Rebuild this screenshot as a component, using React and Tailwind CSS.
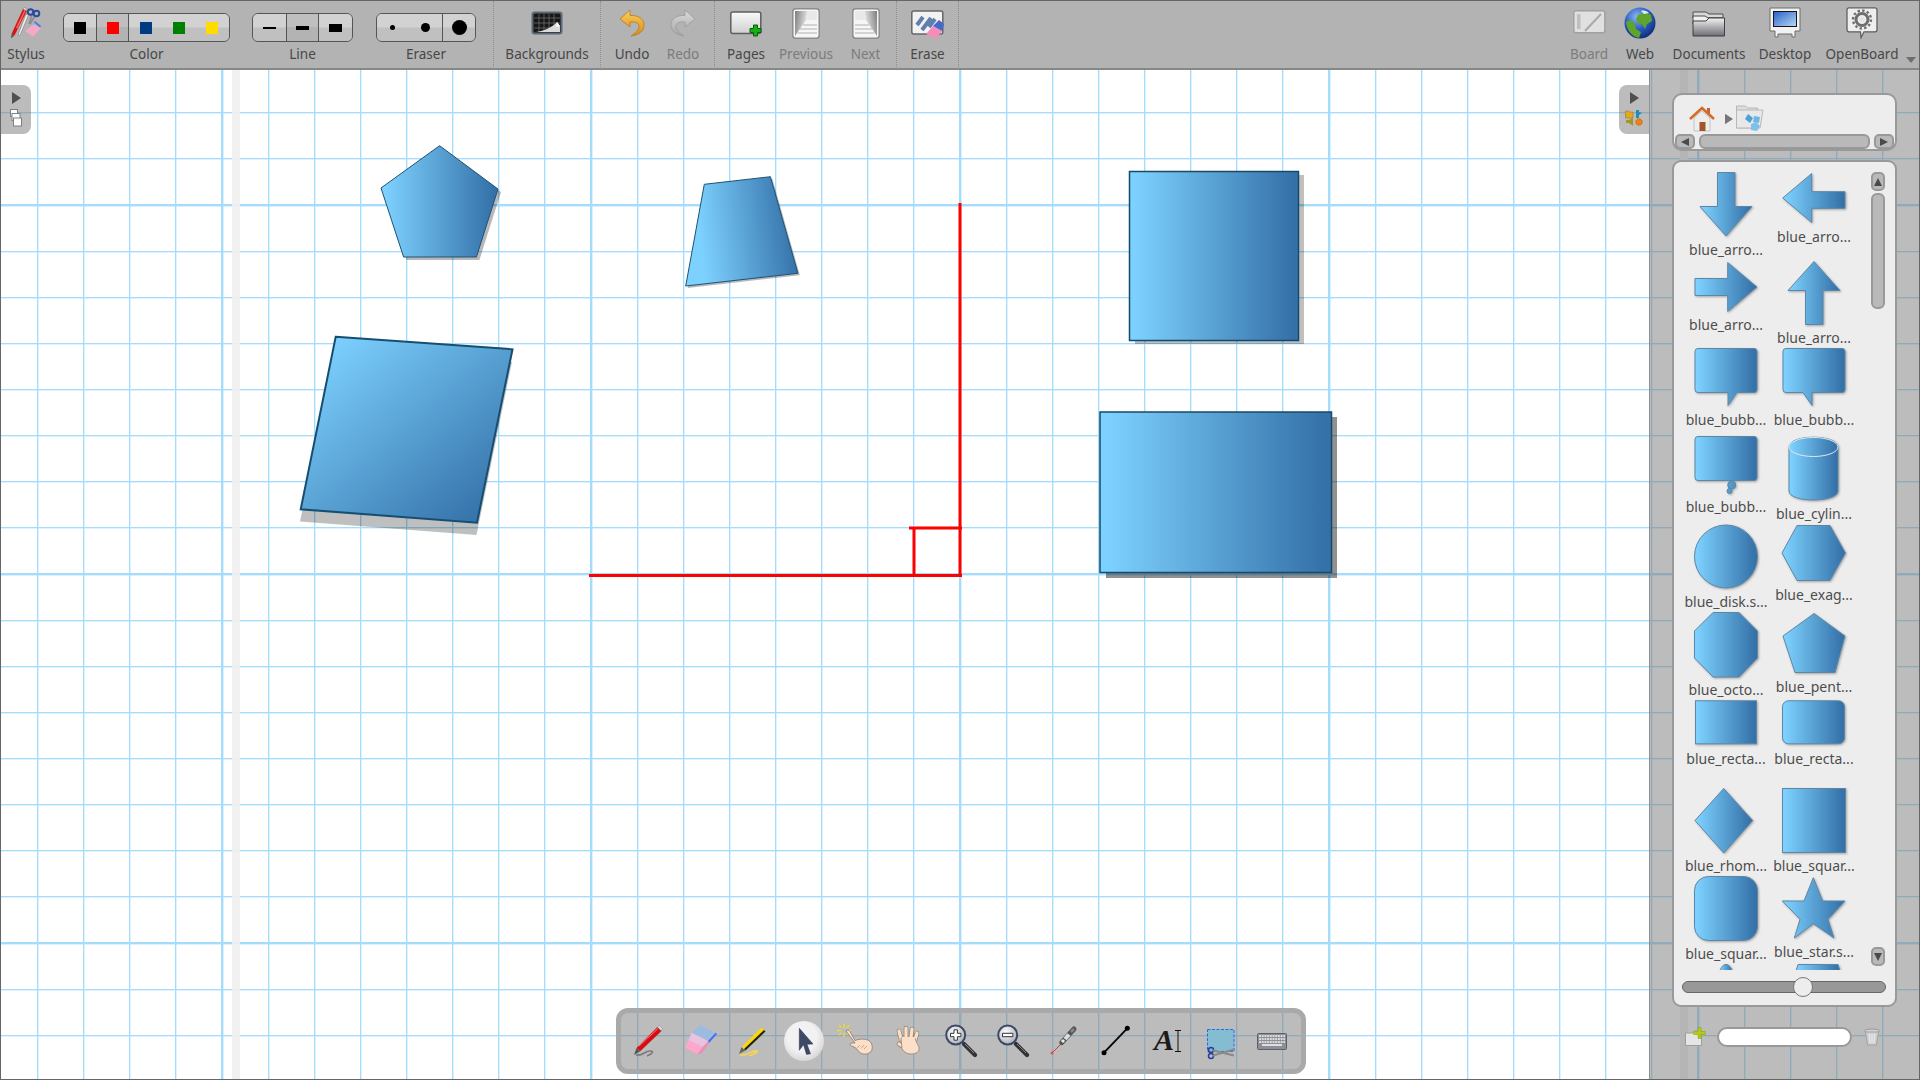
import React from "react";

const FONT = "[font-family:'Noto_Sans','Open_Sans',sans-serif]";

const Grad = ({ id, x1 = 0, y1 = 0, x2 = 1, y2 = 0, a = "#7dd1ff", b = "#3471a8" }) => (
  <linearGradient id={id} x1={x1} y1={y1} x2={x2} y2={y2}>
    <stop offset="0.03" stopColor={a} />
    <stop offset="0.97" stopColor={b} />
  </linearGradient>
);

/* ---------- top bar icons ---------- */
const StylusIcon = () => (
  <svg width="32" height="32" viewBox="0 0 32 32">
    <path d="M22 8l-3 9M25 9l-5 8" stroke="#8d8d92" strokeWidth="1.600" fill="none" />
    <circle cx="20.500" cy="5" r="2.800" fill="none" stroke="#2b4a9e" strokeWidth="2" />
    <circle cx="26.500" cy="6.500" r="2.800" fill="none" stroke="#2b4a9e" strokeWidth="2" />
    <path d="M8 28L16 7l2.500 1L10 28.500z" fill="#efefef" stroke="#777" strokeWidth=".6" />
    <path d="M1.500 27L13 2l4 1.800L4.500 28.500z" fill="#d81515" />
    <path d="M6 21L14.500 3l1.200.5L7.500 21.500z" fill="#f56a6a" />
    <path d="M13 2l1-1.500 3 1.300-.2 2z" fill="#e9e9e9" stroke="#777" strokeWidth=".5" />
    <path d="M1.500 27l3 1.500-3.500 3z" fill="#555" />
    <path d="M15 24l9-7 7 4-8 8.500z" fill="#f7a8c8" />
    <path d="M18 20.500l7-6.500 6 5-.5 2-7-4z" fill="#8fb6dd" />
    <path d="M25 14l6 5-.8 1.500-6-5z" fill="#4d79d0" />
  </svg>
);
const BackgroundsIcon = () => (
  <svg width="32" height="24" viewBox="0 0 32 24">
    <rect x=".5" y=".5" width="31" height="23" rx="3" fill="#5f6878" />
    <rect x="2.500" y="2.500" width="27" height="19" rx="1.500" fill="#171717" />
    <path d="M3 7h26M3 12h26M3 17h26M8 3v18M13 3v18M18 3v18M23 3v18" stroke="#777" strokeWidth=".7" />
    <path d="M5 21c8-1 17-5 21-10l3 4v6z" fill="#d9d9d9" />
    <path d="M26 11l3 4-4 1z" fill="#fff" />
  </svg>
);
const UndoIcon = ({ grey }) => (
  <svg width="26" height="28" viewBox="0 0 26 28" className={grey ? "-scale-x-100" : ""}>
    <defs>
      <linearGradient id={grey ? "ru" : "uu"} x1="0" y1="0" x2="0" y2="1">
        <stop offset="0" stopColor={grey ? "#dcdcdc" : "#fbd15c"} />
        <stop offset="1" stopColor={grey ? "#a4a4a4" : "#d98a16"} />
      </linearGradient>
    </defs>
    <path
      d="M11 1L1 10l10 8v-5c5-.5 9 .5 9 4.500 0 3.500-3 6-8 9.500 8-1 13-5 13-11 0-7-7-10-14-9.500z"
      fill={`url(#${grey ? "ru" : "uu"})`}
      stroke={grey ? "#9a9a9a" : "#b87a1c"}
      strokeWidth=".8"
    />
  </svg>
);
const PagesIcon = () => (
  <svg width="32" height="28" viewBox="0 0 32 28" className="mt-[4px]">
    <defs>
      <linearGradient id="pg" x1="0" y1="0" x2="0" y2="1">
        <stop offset="0" stopColor="#fafafa" />
        <stop offset="1" stopColor="#cfcfcf" />
      </linearGradient>
    </defs>
    <rect x=".8" y="1" width="30" height="21.500" rx="2" fill="url(#pg)" stroke="#5e5e66" strokeWidth="1.500" />
    <path d="M22 16.500h3.500V13h4v3.500H33v4h-3.500V24h-4v-3.500H22z" transform="translate(-2 1)" fill="#16b016" stroke="#0a5c0a" strokeWidth="1" />
  </svg>
);
const PageCurl = ({ flip }) => {
  const id = flip ? "pc2" : "pc1";
  return (
    <svg width="28" height="31" viewBox="0 0 28 31" className="mt-[1px]">
      <defs>
        <linearGradient id={id} x1="0" y1="0" x2="1" y2="0.3">
          <stop offset="0" stopColor="#7e7e7e" />
          <stop offset="1" stopColor="#e6e6e6" />
        </linearGradient>
      </defs>
      <g transform={flip ? "translate(28 0) scale(-1 1)" : ""}>
        <rect x=".8" y=".8" width="26.400" height="29.400" rx="3" fill="#f6f6f6" stroke="#8d8d8d" strokeWidth="1.500" />
        <path d="M3 3h12c2 3-2 5-1 9L3 28z" fill={`url(#${id})`} />
        <path d="M15 3h10v9H14c-1-4 3-6 1-9z" fill="#e9e9e9" />
        <path d="M11 17h14M8 21h17M5.500 25h19.500" stroke="#b0b0b0" strokeWidth="1" />
      </g>
    </svg>
  );
};
const EraseIcon = () => (
  <svg width="34" height="30" viewBox="0 0 34 30" className="mt-[4px]">
    <rect x=".8" y="1" width="31" height="23" rx="2" fill="#f2f2f2" stroke="#66666e" strokeWidth="1.500" />
    <path d="M6 15l6-8M11 20l9-12M18 17l6-8" stroke="#5f7fae" strokeWidth="4" fill="none" />
    <path d="M15 24l7-8 9 5-6 8z" fill="#f58dbb" />
    <path d="M22 16l6-6 5 4-2 7z" fill="#4668c8" />
  </svg>
);
const BoardIcon = () => (
  <svg width="33" height="26" viewBox="0 0 33 26" opacity=".75">
    <rect x=".8" y=".8" width="31" height="22" rx="2" fill="#efefef" stroke="#9a9a9a" strokeWidth="1.400" />
    <rect x="4" y="4" width="3.500" height="15" fill="#c3c3c3" />
    <path d="M12 21L28 4" stroke="#a5a5a5" strokeWidth="2" />
  </svg>
);
const Globe = () => (
  <svg width="32" height="32" viewBox="0 0 32 32">
    <defs>
      <radialGradient id="gl" cx=".4" cy=".3" r=".8">
        <stop offset="0" stopColor="#8fb8f0" />
        <stop offset=".5" stopColor="#2a5cc0" />
        <stop offset="1" stopColor="#0c1f66" />
      </radialGradient>
    </defs>
    <circle cx="16" cy="16" r="15.500" fill="url(#gl)" />
    <path d="M14 8l8-3 5 3 1 6-5 3-2 5-3-5-4-1-2-4zM2 15l5-2 4 4 1 5 5 3-2 6c-7-1-12-8-13-16z" fill="#5fa52c" />
    <path d="M17 4c3-1 6 0 8 2l-5 1z" fill="#dfeaff" />
  </svg>
);
const DocumentsIcon = () => (
  <svg width="34" height="30" viewBox="0 0 34 30">
    <defs>
      <linearGradient id="df" x1="0" y1="0" x2="0" y2="1">
        <stop offset="0" stopColor="#f3f3f3" />
        <stop offset="1" stopColor="#6c6c74" />
      </linearGradient>
    </defs>
    <path d="M1 4h13l3 2h14v4H1z" fill="#d8d8d8" stroke="#4c4c50" strokeWidth="1" />
    <path d="M1 8h12l3 2h14v6H1z" fill="#efefef" stroke="#4c4c50" strokeWidth="1" />
    <path d="M1 13h13l3-3h15.500v18H1z" fill="url(#df)" stroke="#3e3e42" strokeWidth="1" />
  </svg>
);
const DesktopIcon = () => (
  <svg width="32" height="31" viewBox="0 0 32 31">
    <defs>
      <linearGradient id="ds" x1="0" y1="0" x2="1" y2="1">
        <stop offset="0" stopColor="#2a63c8" />
        <stop offset="1" stopColor="#b6d6f4" />
      </linearGradient>
    </defs>
    <path d="M1 1h30v23h-5v6h-3v-3H9v3H6v-6H1z" fill="#f2f2f2" stroke="#6d6d6d" strokeWidth="1" />
    <rect x="4" y="4" width="24" height="16" fill="#15151a" />
    <rect x="5" y="5" width="22" height="14" fill="url(#ds)" />
  </svg>
);
const OpenBoardIcon = () => (
  <svg width="32" height="32" viewBox="0 0 32 32">
    <path d="M3 .8h26a2 2 0 0 1 2 2v20a2 2 0 0 1-2 2H18l-3 6-.5-6H3a2 2 0 0 1-2-2v-20a2 2 0 0 1 2-2z" fill="#eee" stroke="#5e5e66" strokeWidth="1.300" />
    <circle cx="16" cy="12.500" r="6" fill="none" stroke="#6e6e6e" strokeWidth="3" />
    <circle cx="16" cy="12.500" r="9" fill="none" stroke="#6e6e6e" strokeWidth="2.400" strokeDasharray="2.400 2.300" />
    <circle cx="16" cy="12.500" r="2.800" fill="#e5e5e5" />
  </svg>
);

/* ---------- bottom toolbar icons ---------- */
const I40 = ({ children }) => (
  <svg width="40" height="40" viewBox="0 0 40 40">
    {children}
  </svg>
);
const Pen = () => (
  <I40>
    <path d="M8 34c8 1 8-4 14-4 5 0 2 3-3 5" stroke="#7b7b7b" strokeWidth="1.600" fill="none" />
    <path d="M6 34l2.500-7 4 3z" fill="#555" />
    <path d="M8.500 27L29.500 6l4 4L12.500 30z" fill="#d40f14" />
    <path d="M11 25L30 7.500" stroke="#ff7b7b" strokeWidth="1" />
    <path d="M29.500 6l2-1.500 3 3-1 2.500z" fill="#ddd" stroke="#777" strokeWidth=".4" />
  </I40>
);
const RubberIcon = () => (
  <I40>
    <path d="M20 4l15.700 7.700L28.300 20l-16.600-8.300z" fill="#9dbbdf" />
    <path d="M35.700 11.700L37 13l-8 9-1-2z" fill="#3f6cf0" />
    <path d="M11.700 11.700L28.300 20 22.700 26 8.300 19.300z" fill="#e8c2de" />
    <path d="M8.300 19.300L22.700 26l-5.400 7.300L5 26.700z" fill="#ffa6cb" />
    <path d="M28.300 20l-5.600 6-5.400 7.300 4-.5 7-9z" fill="#ec8fb8" />
  </I40>
);
const YellowPen = () => (
  <I40>
    <path d="M8 34c8 1 10-4 16-4 4 0-2 3-7 5" stroke="#f5d45a" strokeWidth="1.800" fill="none" />
    <path d="M7 33l2.500-7 4 3.500z" fill="#666" />
    <path d="M9.500 26L29.500 6.500l4 4L13.500 29.500z" fill="#f8d80a" />
    <path d="M12 28L32 9l1.500 1.500-20 19z" fill="#222" />
  </I40>
);
const Cursor = () => (
  <svg width="40" height="40" viewBox="0 0 40 40">
    <defs>
      <radialGradient id="cur" cx=".45" cy=".4" r=".6">
        <stop offset=".6" stopColor="#f2f2f2" />
        <stop offset="1" stopColor="#d8d8d8" />
      </radialGradient>
    </defs>
    <circle cx="20" cy="20" r="20" fill="url(#cur)" />
    <path d="M15.300 7.300L29 23l-6 .3 3.500 9.500-4 .6-3-9.700-4.200 5.600z" fill="#3d4967" stroke="#2a3350" strokeWidth=".5" />
  </svg>
);
const Pointer = () => (
  <I40>
    <path d="M8 3v4M8 12v4M1 9.500h4M11 9.500h4M3 4.500l2 2M11 12l2 2M13 4.500l-2 2M5 12l-2 2" stroke="#ffe000" strokeWidth="1.200" />
    <path d="M10 10c1.500-1.500 3-1 4 .5l5 9c5-2 12-2 15 1 3 3 3 9 0 11-3 2-6 2-9 1-3-2-4-5-6-6-3-1.500-5-2-5-3 0-2 3-1.500 5-1.500z" fill="#fbdfc8" stroke="#94806f" strokeWidth=".9" />
    <path d="M24 24l-3 3M28 24l-3 3.500M31 25l-3 3" stroke="#b89c86" strokeWidth=".8" />
  </I40>
);
const HandIcon = () => (
  <I40>
    <g strokeLinecap="round" fill="none">
      <g stroke="#94806f" strokeWidth="4.600">
        <path d="M13 18L11 10M18 16V7M23 16l1-8M27 19l2-7M16 26l-5-3" />
      </g>
      <g stroke="#fbdfc8" strokeWidth="3.200">
        <path d="M13 18L11 10M18 16V7M23 16l1-8M27 19l2-7M16 26l-5-3" />
      </g>
    </g>
    <path d="M13 17h14c1 4 2 5 4 9 1 5-3 7-8 7-4 0-7-2-9-5z" fill="#fbdfc8" stroke="#94806f" strokeWidth=".8" />
    <path d="M14 16h13v4H14z" fill="#fbdfc8" />
  </I40>
);
const Magnifier = ({ plus }) => {
  const id = plus ? "mgp" : "mgm";
  return (
    <I40>
      <defs>
        <radialGradient id={id} cx=".4" cy=".35" r=".8">
          <stop offset="0" stopColor="#fff" />
          <stop offset="1" stopColor="#9aa0aa" />
        </radialGradient>
      </defs>
      <path d="M24 23l11 11" stroke="#333" strokeWidth="4.200" strokeLinecap="round" />
      <path d="M25 23l9 9" stroke="#888" strokeWidth="1" />
      <circle cx="15.700" cy="14" r="9.500" fill={`url(#${id})`} stroke="#3e4866" strokeWidth="2" />
      <path d={plus ? "M10.500 12.300h3.500V8.800h3.400v3.500h3.500v3.400h-3.500v3.500H14v-3.500h-3.500z" : "M10.500 12.300h10.400v3.400H10.500z"} fill="#fff" stroke="#333" strokeWidth="1" />
    </I40>
  );
};
const Laser = () => (
  <I40>
    <path d="M8 32L18 22" stroke="#e23030" strokeWidth="1" />
    <circle cx="8" cy="32" r="1.600" fill="#e84040" opacity=".8" />
    <path d="M17.700 21.700L30 8" stroke="#555" strokeWidth="5" strokeLinecap="round" />
    <path d="M21 18l4-4.500" stroke="#ddd" strokeWidth="4" />
    <path d="M18 21l2-2" stroke="#eee" strokeWidth="3" />
    <path d="M27 11l3-3" stroke="#888" strokeWidth="2.500" />
  </I40>
);
const LineIcon = () => (
  <I40>
    <path d="M8 31.700L31.300 7.300" stroke="#000" strokeWidth="1.800" />
    <circle cx="8" cy="31.700" r="2.500" fill="#000" />
    <circle cx="31.300" cy="7.300" r="2.500" fill="#000" />
  </I40>
);
const TextIcon = () => (
  <div className="relative w-[40px] h-[40px]">
    <span className="absolute left-[6px] top-[1px] text-[30px] leading-[36px] font-bold italic text-[#1b1b1b] [font-family:'Liberation_Serif',serif]">A</span>
    <svg className="absolute inset-0" width="40" height="40" viewBox="0 0 40 40">
      <path d="M27 9.500h3v21h-3M33 9.500h-3M33 30.500h-3" stroke="#111" strokeWidth="1" fill="none" />
    </svg>
  </div>
);
const Capture = () => (
  <I40>
    <rect x="7.500" y="8.500" width="26.500" height="22" fill="#84bdd1" stroke="#1e6bf0" strokeWidth="1" strokeDasharray="3 1.500" />
    <circle cx="11" cy="29" r="2.500" fill="none" stroke="#2b3f96" strokeWidth="1.500" />
    <circle cx="11" cy="35" r="2.500" fill="none" stroke="#2b3f96" strokeWidth="1.500" />
    <path d="M13 29.500l21 5M13 34.500l21-6" stroke="#8a8a8a" strokeWidth="2" />
  </I40>
);
const Keyboard = () => (
  <I40>
    <rect x="5.500" y="12.500" width="29" height="16" rx="1" fill="#8c8f96" stroke="#5e6068" strokeWidth="1" />
    <path d="M7 15h26M7 18h26M7 21h26" stroke="#f3f3f3" strokeWidth="1.600" strokeDasharray="2 .7" />
    <path d="M10 24h20" stroke="#f3f3f3" strokeWidth="1.600" />
  </I40>
);

/* ---------- small panel icons ---------- */
const Tri = ({ right = true, c = "#4c4c4c", w = 9, h = 12 }) => (
  <svg width={w} height={h} viewBox="0 0 9 12">
    <path d={right ? "M0 0l9 6-9 6z" : "M9 0L0 6l9 6z"} fill={c} />
  </svg>
);
const Stack = () => (
  <svg width="12" height="18" viewBox="0 0 12 18">
    <rect x=".5" y=".5" width="7" height="7" fill="#fff" stroke="#808080" />
    <rect x="2" y="4.500" width="8" height="7" fill="#fff" stroke="#808080" />
    <rect x="3.500" y="9" width="8" height="8" fill="#fff" stroke="#808080" />
  </svg>
);
const Lib = () => (
  <svg width="18" height="17" viewBox="0 0 18 17">
    <path d="M.5 2h3l1 1H8v6H.5z" fill="#e4a720" stroke="#9a7010" strokeWidth=".5" />
    <path d="M11 1h3v2l3 1-3 2v3h-3z" fill="#1f8fb8" />
    <path d="M1 11h3l4-3v9l-4-3H1z" fill="#a29a20" />
    <circle cx="14" cy="13" r="3.200" fill="#f07f18" stroke="#c96010" strokeWidth="1" strokeDasharray="1.500 1" />
  </svg>
);
const Home = () => (
  <svg width="26" height="26" viewBox="0 0 26 26">
    <path d="M5 12v13h16V12L13 5z" fill="#ededed" stroke="#aaa" strokeWidth=".6" />
    <rect x="10.500" y="16" width="6" height="9" fill="#a0552a" />
    <path d="M18 2h3v6l-3-2z" fill="#c9622a" />
    <path d="M1 13L13 2l12 11" fill="none" stroke="#d46b2b" strokeWidth="2.500" />
  </svg>
);
const LibFolder = () => (
  <svg width="28" height="28" viewBox="0 0 28 28">
    <path d="M.5 1h9l2 2h10v20H.5z" fill="#dedede" stroke="#b5b5b5" />
    <path d="M.5 5h26.500l-3 18H.5z" fill="#e8e8e8" stroke="#b8b8b8" />
    <path d="M12 9l5 4-3 5-5-4z" fill="#4aa2d5" />
    <path d="M18 11l6 1-1 6-6-1z" fill="#6fb7e2" />
    <path d="M15 19l5-2 4 4-3 5-6-1z" fill="#7fc0ea" />
  </svg>
);
const FolderPlus = () => (
  <svg width="21" height="19" viewBox="0 0 21 19">
    <path d="M.5 6h7l2-2h7v14.500H.5z" fill="#e5e5e5" stroke="#9d9d9d" />
    <path d="M13 .5h3v4h4.500v3H16v4h-3v-4H8.500v-3H13z" fill="#b4cc10" stroke="#8a9c10" strokeWidth=".5" />
  </svg>
);
const Trash = () => (
  <svg width="16" height="18" viewBox="0 0 16 18">
    <ellipse cx="8" cy="3" rx="7.500" ry="2" fill="#d2d2d2" stroke="#9a9a9a" />
    <path d="M1.500 4l2 13h9l2-13z" fill="#cfcfcf" stroke="#a2a2a2" />
    <path d="M5.500 6l.5 9M8 6v9M10.500 6l-.5 9" stroke="#eee" />
  </svg>
);

/* ---------- thumbnails ---------- */
const S = "#5d87a5";
const thumbs = [
  { l: "blue_arro...", h: 65, t: 0, d: <polygon points="23.500,.5 41,.5 41,34.500 58,34.500 32,64 6,34.500 23.500,34.500" /> },
  { l: "blue_arro...", h: 51, t: 1, d: <polygon points=".7,25 29.700,.5 29.700,18.700 63,18.700 63,35.300 29.700,35.300 29.700,49.500" /> },
  { l: "blue_arro...", h: 50, t: 2, d: <polygon points="1,16.500 33.700,16.500 33.700,.5 63,25 33.700,49.500 33.700,33.500 1,33.500" /> },
  { l: "blue_arro...", h: 64, t: 1, d: <polygon points="32,.5 58,29.500 41,29.500 41,63.500 23.500,63.500 23.500,29.500 6,29.500" /> },
  { l: "blue_bubb...", h: 59, t: 0, d: <path d="M4 .5h56a3 3 0 0 1 3 3v38a3 3 0 0 1-3 3H43L34 57.500V44.500H4a3 3 0 0 1-3-3v-38a3 3 0 0 1 3-3z" /> },
  { l: "blue_bubb...", h: 59, t: 0, d: <path d="M4 .5h56a3 3 0 0 1 3 3v38a3 3 0 0 1-3 3H30v13L21 44.500H4a3 3 0 0 1-3-3v-38a3 3 0 0 1 3-3z" /> },
  { l: "blue_bubb...", h: 58, t: 0, d: <path d="M4 .5h56a3 3 0 0 1 3 3v38a3 3 0 0 1-3 3H4a3 3 0 0 1-3-3v-38a3 3 0 0 1 3-3zM41.700 49a4 4 0 1 1-8 0 4 4 0 0 1 8 0zM38 55a2.500 2.500 0 1 1-5 0 2.500 2.500 0 0 1 5 0z" /> },
  { l: "blue_cylin...", h: 64, t: 1, d: <g><path d="M7 10c0-13 49-13 49 0v44c0 12-49 12-49 0z" /><ellipse cx="31.500" cy="10" rx="24.500" ry="9.500" stroke="#dfe8ee" /></g> },
  { l: "blue_disk.s...", h: 65, t: 0, d: <circle cx="32" cy="32.500" r="31.500" /> },
  { l: "blue_exag...", h: 57, t: 1, d: <polygon points="15,.5 48,.5 63.500,28 48,55.500 15,55.500 0,28" /> },
  { l: "blue_octo...", h: 65, t: 0, d: <polygon points="19,.5 45,.5 63.500,19 63.500,46 45,65 19,65 .5,46 .5,19" /> },
  { l: "blue_pent...", h: 61, t: 1, d: <polygon points="32,.5 63,23 53,59.500 13,59.500 1,23" /> },
  { l: "blue_recta...", h: 46, t: 0, d: <rect x="1.500" y=".8" width="61" height="43" /> },
  { l: "blue_recta...", h: 46, t: 0, d: <rect x=".5" y=".8" width="62" height="43" rx="6" /> },
  { l: "blue_rhom...", h: 65, t: 0, d: <polygon points="29.700,.5 58.700,32.500 29.700,65 1,32.500" /> },
  { l: "blue_squar...", h: 65, t: 0, d: <rect x=".5" y=".5" width="63" height="64" /> },
  { l: "blue_squar...", h: 65, t: 0, d: <rect x=".5" y=".5" width="63" height="64" rx="14" /> },
  { l: "blue_star.s...", h: 62, t: 1, d: <polygon points="31.300,.7 40.700,24 63,24 46,42.300 52,61 31.300,46.700 12.300,61 18,42.300 .3,24 22,24" /> },
  { l: "", h: 20, t: 0, d: <path d="M32 .5c3 0 5 3 6 6h-12c1-3 3-6 6-6z" /> },
  { l: "", h: 20, t: 0, d: <polygon points="16,.5 56,.5 58,7 14,7" /> },
];

const Thumb = ({ t, i }) => (
  <div className="flex flex-col items-center h-[88px] w-[88px]">
    <svg
      width="64"
      height={t.h}
      viewBox={`0 0 64 ${t.h}`}
      style={{ marginTop: t.t }}
      className="shrink-0 drop-shadow-[1.5px_1.5px_1px_rgba(0,0,0,0.3)] overflow-visible"
    >
      <defs>
        <Grad id={`th${i}`} />
      </defs>
      <g fill={`url(#th${i})`} stroke={S} strokeWidth="1">
        {t.d}
      </g>
    </svg>
    {t.l && <div className="mt-[3px] h-[20px] leading-[20px] text-[14px] text-[#4d4d4d] whitespace-nowrap">{t.l}</div>}
  </div>
);

/* ---------- canvas ---------- */
const vLines = [];
const hLines = [];
for (let k = -4; k <= 37; k++) {
  const x = 222 + 46.125 * k;
  vLines.push(k % 8 === 0 ? [Math.floor(x) - 1, 2.4] : [Math.floor(x), 1.35]);
}
for (let k = -3; k <= 19; k++) {
  const y = 205 + 46.125 * k;
  hLines.push(k % 8 === 0 ? [Math.floor(y) - 1, 2.4] : [Math.floor(y), 1.35]);
}

const Canvas = () => (
  <svg className="absolute inset-0" width="1920" height="1010" viewBox="0 70 1920 1010">
    <defs>
      <Grad id="gPent" />
      <Grad id="gTrap" x1="0.05" y1="0.1" x2="0.95" y2="0" />
      <Grad id="gQuad" x1="0.05" y1="0.05" x2="0.95" y2="0.95" />
      <Grad id="gR1" />
      <Grad id="gR2" />
    </defs>
    <rect x="0" y="70" width="1920" height="1010" fill="#fff" />
    <g fill="#a5dcfb">
      {vLines.map(([x, w]) => (
        <rect key={`v${x}`} x={x} y="70" width={w} height="1010" />
      ))}
      {hLines.map(([y, w]) => (
        <rect key={`h${y}`} x="0" y={y} width="1920" height={w} />
      ))}
    </g>
    <rect x="232" y="70" width="8" height="1010" fill="#efefef" fillOpacity=".9" shapeRendering="crispEdges" />
    <rect x="1680" y="70" width="8" height="1010" fill="#efefef" fillOpacity=".9" shapeRendering="crispEdges" />

    <polygon points="442.600,148.700 501,192 479.400,260 406.600,260 384,191" fill="#000" fillOpacity=".28" />
    <polygon points="439.600,145.700 498,189 476.400,257 403.600,257 381,188" fill="url(#gPent)" stroke="#1d5273" strokeWidth="1" />

    <polygon points="706.300,186.300 772.400,178.700 799.900,275.300 687.700,288" fill="#000" fillOpacity=".28" />
    <polygon points="704.300,184.300 770.400,176.700 797.900,273.300 685.700,286" fill="url(#gTrap)" stroke="#1d5273" strokeWidth="1" />

    <polygon points="335,349 512,362 476.500,535 300,521.500" fill="#000" fillOpacity=".25" />
    <polygon points="335.700,336.700 512.500,349.300 477,522.700 300.700,509.300" fill="url(#gQuad)" stroke="#154e70" strokeWidth="2" />

    <rect x="1135" y="175" width="169" height="169" fill="#000" fillOpacity=".25" shapeRendering="crispEdges" />
    <rect x="1129.500" y="171.500" width="169" height="169" fill="url(#gR1)" stroke="#174a68" strokeWidth="1.500" />

    <rect x="1106" y="417" width="231" height="161" fill="#000" fillOpacity=".43" shapeRendering="crispEdges" />
    <rect x="1100" y="412" width="231.500" height="160.500" fill="url(#gR2)" stroke="#174a68" strokeWidth="1.500" />

    <g stroke="#ff0000" strokeWidth="3" fill="none">
      <path d="M960 203V576M589 575.500H962M909 528H962M914 528V575" />
    </g>
  </svg>
);

/* ---------- chrome ---------- */
const Label = ({ children, off }) => (
  <div className={`h-[20px] leading-[20px] text-[13.5px] whitespace-nowrap ${off ? "text-[#7c7c7c]" : "text-[#474747]"}`}>{children}</div>
);
const Tool = ({ w, label, off, children }) => (
  <div className="flex flex-col items-center shrink-0" style={{ width: w }}>
    <div className="h-[43px] flex items-center justify-center">{children}</div>
    <Label off={off}>{label}</Label>
  </div>
);
const Sep = () => <div className="w-px h-[68px] shrink-0 border-l border-dotted border-[#8c8c8c]" />;

const Seg = ({ w, on, last, children }) => (
  <div
    className={`h-full flex items-center justify-center ${last ? "" : "border-r border-[#555]"} ${
      on ? "bg-[linear-gradient(#bfbfbf_50%,#b3b3b3_50%)]" : "bg-[linear-gradient(#d2d2d2_48%,#c0c0c0_52%)]"
    }`}
    style={{ width: w }}
  >
    {children}
  </div>
);
const Swatch = ({ c }) => <div className="w-[12px] h-[12px]" style={{ background: c }} />;
const Group = ({ label, ml, children }) => (
  <div className="flex flex-col items-center shrink-0" style={{ marginLeft: ml }}>
    <div className="mt-[12px] h-[29px] flex rounded-[6px] border border-[#555] overflow-hidden">{children}</div>
    <div className="mt-[2px]">
      <Label>{label}</Label>
    </div>
  </div>
);

const TopBar = () => (
  <header className="h-[70px] flex items-start bg-[#b3b3b3] border-t border-b-2 border-t-[#666] border-b-[#878787] pl-px">
    <Tool w={50} label="Stylus">
      <StylusIcon />
    </Tool>
    <Group label="Color" ml={12}>
      <Seg w={33}>
        <Swatch c="#000" />
      </Seg>
      <Seg w={32} on>
        <Swatch c="#ff0000" />
      </Seg>
      <Seg w={100} last>
        <div className="flex gap-[21px]">
          <Swatch c="#003c80" />
          <Swatch c="#008000" />
          <Swatch c="#ffdc00" />
        </div>
      </Seg>
    </Group>
    <Group label="Line" ml={22}>
      <Seg w={34}>
        <div className="w-[13px] h-[2px] bg-black" />
      </Seg>
      <Seg w={32} on>
        <div className="w-[13px] h-[4px] bg-black" />
      </Seg>
      <Seg w={33} last>
        <div className="w-[13px] h-[8px] bg-black" />
      </Seg>
    </Group>
    <Group label="Eraser" ml={23}>
      <Seg w={66}>
        <div className="flex items-center gap-[26px]">
          <div className="w-[5px] h-[5px] rounded-full bg-black" />
          <div className="w-[9px] h-[9px] rounded-full bg-black" />
        </div>
      </Seg>
      <Seg w={32} last>
        <div className="w-[15px] h-[15px] rounded-full bg-black" />
      </Seg>
    </Group>
    <div className="w-[17px] shrink-0" />
    <Sep />
    <Tool w={106} label="Backgrounds">
      <BackgroundsIcon />
    </Tool>
    <Sep />
    <Tool w={62} label="Undo">
      <UndoIcon />
    </Tool>
    <Tool w={40} label="Redo" off>
      <UndoIcon grey />
    </Tool>
    <div className="w-[11px] shrink-0" />
    <Sep />
    <Tool w={62} label="Pages">
      <PagesIcon />
    </Tool>
    <Tool w={58} label="Previous" off>
      <PageCurl />
    </Tool>
    <Tool w={61} label="Next" off>
      <PageCurl flip />
    </Tool>
    <Sep />
    <Tool w={61} label="Erase">
      <EraseIcon />
    </Tool>
    <Sep />
    <div className="flex-1" />
    <Tool w={50} label="Board" off>
      <BoardIcon />
    </Tool>
    <Tool w={52} label="Web">
      <Globe />
    </Tool>
    <Tool w={86} label="Documents">
      <DocumentsIcon />
    </Tool>
    <Tool w={66} label="Desktop">
      <DesktopIcon />
    </Tool>
    <Tool w={88} label="OpenBoard">
      <OpenBoardIcon />
    </Tool>
    <div className="w-[14px] shrink-0 relative h-full">
      <svg className="absolute left-0 top-[56px]" width="10" height="6" viewBox="0 0 10 6">
        <path d="M0 0h10L5 6z" fill="#6e6e6e" />
      </svg>
    </div>
  </header>
);

const ScrollBtn = ({ dir, w = "w-[14px]", h = "h-[19px]" }) => (
  <div className={`${w} ${h} rounded-[5px] border-2 border-[#999] bg-[#b9b9b9] flex items-center justify-center shrink-0`}>
    <svg width="8" height="8" viewBox="0 0 8 8">
      <path d={{ up: "M4 0l4 8H0z", down: "M0 0h8L4 8z", left: "M8 0v8L0 4z", right: "M0 0v8l8-4z" }[dir]} fill="#4a4a4a" />
    </svg>
  </div>
);

const RightPanel = () => (
  <aside className="absolute top-0 right-0 bottom-0 w-[271px] bg-[#797979]/50 border-l border-[#8f8f8f] pl-[22px]">
    <div className="mt-[23px] w-[225px] h-[58px] rounded-[10px] border-2 border-[#999] bg-[#ededed] flex flex-col px-[1px]">
      <div className="flex items-center h-[39px] pl-[14px] pt-[8px]">
        <Home />
        <div className="ml-[10px]">
          <Tri c="#777" w={8} h={12} />
        </div>
        <div className="ml-[3px]">
          <LibFolder />
        </div>
      </div>
      <div className="flex items-center gap-[4px]">
        <ScrollBtn dir="left" w="w-[20px]" h="h-[15px]" />
        <div className="w-[174px] h-[15px] rounded-[6px] border-2 border-[#999] bg-[#b9b9b9]" />
        <ScrollBtn dir="right" w="w-[20px]" h="h-[15px]" />
      </div>
    </div>
    <div className={`mt-[9px] w-[225px] h-[847px] rounded-[9px] border-2 border-[#999] bg-[#ededed] pl-[8px] pt-[10px] ${FONT}`}>
      <div className="flex h-[798px]">
        <div className="w-[176px] h-[798px] overflow-hidden grid grid-cols-2 auto-rows-[88px]">
          {thumbs.map((t, i) => (
            <Thumb key={i} t={t} i={i} />
          ))}
        </div>
        <div className="ml-[13px] w-[14px] flex flex-col">
          <ScrollBtn dir="up" />
          <div className="mt-[2px] h-[116px] rounded-[6px] border-2 border-[#999] bg-[#b9b9b9]" />
          <div className="flex-1" />
          <ScrollBtn dir="down" />
          <div className="h-[4px]" />
        </div>
      </div>
      <div className="relative mt-[11px] w-[204px] h-[12px] rounded-full bg-[#989898] border border-[#666]">
        <div className="absolute left-[110px] top-[-5px] w-[20px] h-[20px] rounded-full bg-[#ededed] border border-[#777]" />
      </div>
    </div>
    <div className="mt-[20px] flex items-center h-[19px] pl-[13px]">
      <FolderPlus />
      <div className="ml-[11px] w-[135px] h-[20px] rounded-full bg-white border-2 border-[#999]" />
      <div className="ml-[12px]">
        <Trash />
      </div>
    </div>
  </aside>
);

const BottomBar = () => {
  const items = [
    <Pen key="a" />,
    <RubberIcon key="b" />,
    <YellowPen key="c" />,
    <Cursor key="d" />,
    <Pointer key="e" />,
    <HandIcon key="f" />,
    <Magnifier key="g" plus />,
    <Magnifier key="h" />,
    <Laser key="i" />,
    <LineIcon key="j" />,
    <TextIcon key="k" />,
    <Capture key="l" />,
    <Keyboard key="m" />,
  ];
  return (
    <div className="absolute left-[616px] top-[938px] w-[690px] h-[66px] rounded-[12px] border-[5px] border-[#a9a9a9] bg-[#797979]/50 flex items-center pl-[1px]">
      {items.map((it) => (
        <div key={it.key} className="w-[52px] h-[40px] flex items-center justify-center shrink-0">
          {it}
        </div>
      ))}
    </div>
  );
};

export default function App() {
  return (
    <div className={`relative w-[1920px] h-[1080px] overflow-hidden flex flex-col bg-white ${FONT}`}>
      <TopBar />
      <main className="relative flex-1">
        <Canvas />
        <div className="absolute left-0 top-[15px] w-[31px] h-[49px] rounded-r-[8px] bg-[#797979]/50 flex flex-col items-center pt-[7px] pl-[1px]">
          <Tri c="#4f4f4f" />
          <div className="mt-[5px]">
            <Stack />
          </div>
        </div>
        <div className="absolute right-[271px] top-[15px] w-[30px] h-[49px] rounded-l-[8px] bg-[#797979]/50 flex flex-col items-center pt-[7px]">
          <Tri c="#4f4f4f" />
          <div className="mt-[5px]">
            <Lib />
          </div>
        </div>
        <RightPanel />
        <BottomBar />
      </main>
      <div className="absolute inset-0 border border-[#666] pointer-events-none" />
    </div>
  );
}
